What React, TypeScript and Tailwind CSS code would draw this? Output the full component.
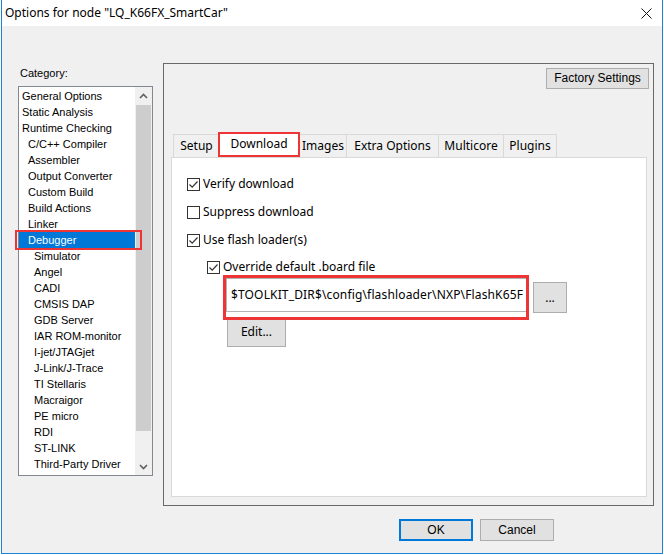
import React from "react";

const ui = "font-['Noto_Sans',sans-serif]";
const tahoma = "font-['Liberation_Sans',Arial,sans-serif]";
const narrow = "font-['Liberation_Sans_Narrow','Liberation_Sans',Arial,sans-serif]";

const categories: [string, number][] = [
  ["General Options", 0],
  ["Static Analysis", 0],
  ["Runtime Checking", 0],
  ["C/C++ Compiler", 1],
  ["Assembler", 1],
  ["Output Converter", 1],
  ["Custom Build", 1],
  ["Build Actions", 1],
  ["Linker", 1],
  ["Debugger", 1],
  ["Simulator", 2],
  ["Angel", 2],
  ["CADI", 2],
  ["CMSIS DAP", 2],
  ["GDB Server", 2],
  ["IAR ROM-monitor", 2],
  ["I-jet/JTAGjet", 2],
  ["J-Link/J-Trace", 2],
  ["TI Stellaris", 2],
  ["Macraigor", 2],
  ["PE micro", 2],
  ["RDI", 2],
  ["ST-LINK", 2],
  ["Third-Party Driver", 2],
];

const indent = ["pl-[3px]", "pl-[9px]", "pl-[15px]"];

function Check({ checked }: { checked: boolean }) {
  return (
    <span className="flex h-[13px] w-[13px] shrink-0 items-center justify-center border border-[#333333] bg-white">
      {checked && (
        <svg width="11" height="11" viewBox="0 0 11 11">
          <path d="M1.5 5.5 L4.2 8.2 L9.5 2.5" fill="none" stroke="#333333" strokeWidth="1.2" />
        </svg>
      )}
    </span>
  );
}

function CheckRow({ label, checked, className }: { label: string; checked: boolean; className: string }) {
  return (
    <div className={`flex h-[20px] items-center gap-[3px] ${className}`}>
      <Check checked={checked} />
      <span className="text-[12px] leading-[20px] text-black">{label}</span>
    </div>
  );
}

function Chevron({ up }: { up: boolean }) {
  return (
    <svg width="9" height="6" viewBox="0 0 9 6">
      <path
        d={up ? "M1 5 L4.5 1.5 L8 5" : "M1 1 L4.5 4.5 L8 1"}
        fill="none"
        stroke="#606060"
        strokeWidth="1.6"
      />
    </svg>
  );
}

export default function App() {
  return (
    <div className="h-[555px] w-[664px] overflow-hidden bg-white">
      <div className="ml-px flex h-[554px] w-[662px] flex-col border-x border-b border-[#1883d7] bg-[#f0f0f0]">
        {/* title bar */}
        <div className={`flex h-[26px] shrink-0 items-center bg-white pl-[3px] ${ui}`}>
          <span className="text-[12px] text-black">Options for node "LQ_K66FX_SmartCar"</span>
          <svg className="ml-auto mr-[10px]" width="11" height="11" viewBox="0 0 11 11">
            <path d="M0.5 0.5 L10.5 10.5 M10.5 0.5 L0.5 10.5" stroke="#111" strokeWidth="1" />
          </svg>
        </div>

        <div className="mt-[37px] flex h-[443px] shrink-0">
          {/* category column */}
          <div className={`ml-[16px] w-[135px] ${tahoma}`}>
            <div className="h-[23px] pl-[2px] pt-[3px] text-[11px] leading-[14px] text-black">Category:</div>
            <div className="relative flex h-[390px] border border-[#828790] bg-white">
              <div className="w-[116px] pt-px">
                {categories.map(([name, lvl]) => {
                  const sel = name === "Debugger";
                  return (
                    <div
                      key={name}
                      className={`h-[16px] whitespace-nowrap text-[11px] leading-[16px] ${indent[lvl]} ${
                        sel ? "bg-[#0078d7] text-white" : "text-black"
                      }`}
                    >
                      {name}
                    </div>
                  );
                })}
              </div>
              <div className="flex w-[17px] flex-col bg-[#f0f0f0]">
                <div className="flex h-[17px] items-center justify-center">
                  <Chevron up />
                </div>
                <div className="mx-px mt-px h-[326px] bg-[#cdcdcd]" />
                <div className="flex-1" />
                <div className="flex h-[17px] items-center justify-center">
                  <Chevron up={false} />
                </div>
              </div>
              <div className="absolute left-[-4px] top-[143px] h-[20px] w-[127px] border-2 border-[#ee3535]" />
            </div>
          </div>

          {/* options panel */}
          <div className={`ml-[10px] flex w-[491px] flex-col border border-[#696969] ${ui}`}>
            <div className="mr-[4px] mt-[4px] flex justify-end">
              <button
                className={`h-[21px] w-[103px] border border-[#adadad] bg-[#e1e1e1] text-[12px] leading-[19px] text-black ${narrow}`}
              >
                Factory Settings
              </button>
            </div>

            <div className="ml-[9px] mt-[43px] flex h-[25px] items-end text-[12px] text-black">
              <div className="flex h-[23px] w-[45px] items-center justify-center border-l border-t border-[#d9d9d9] pl-[1px]">
                Setup
              </div>
              <div className="flex h-[25px] w-[82px] items-center justify-center border-2 border-[#ee3535] bg-white pb-[2px]">
                Download
              </div>
              <div className="flex h-[23px] w-[46px] items-center justify-center border-t border-[#d9d9d9]">
                Images
              </div>
              <div className="flex h-[23px] w-[92px] items-center justify-center border-l border-t border-[#d9d9d9]">
                Extra Options
              </div>
              <div className="flex h-[23px] w-[65px] items-center justify-center border-l border-t border-[#d9d9d9]">
                Multicore
              </div>
              <div className="flex h-[23px] w-[54px] items-center justify-center border-x border-t border-[#d9d9d9]">
                Plugins
              </div>
            </div>

            <div className="ml-[7px] h-[340px] w-[476px] border border-[#d9d9d9] bg-white">
              <CheckRow className="ml-[15px] mt-[16px]" label="Verify download" checked />
              <CheckRow className="ml-[15px] mt-[8px]" label="Suppress download" checked={false} />
              <CheckRow className="ml-[15px] mt-[8px]" label="Use flash loader(s)" checked />
              <CheckRow className="ml-[35px] mt-[7px]" label="Override default .board file" checked />

              <div className="ml-[54px] mt-px flex items-start">
                <div className="relative h-[34px] w-[301px]">
                  <div className="flex h-full items-center overflow-hidden whitespace-nowrap border border-[#b4b4b4] bg-white pl-[4px] text-[12px] tracking-[0.15px] text-black">
                    $TOOLKIT_DIR$\config\flashloader\NXP\FlashK65F
                  </div>
                  <div className="absolute left-[-3px] top-[-3px] z-10 h-[45px] w-[306px] border-[3px] border-[#ee3535]" />
                </div>
                <button className="ml-[6px] mt-[4px] h-[31px] w-[34px] border border-[#adadad] bg-[#e1e1e1] text-[12px] leading-[22px] text-black">
                  ...
                </button>
              </div>

              <button className="ml-[55px] mt-[4px] block h-[30px] w-[59px] border border-[#adadad] bg-[#e1e1e1] text-[12px] text-black">
                Edit...
              </button>
            </div>
          </div>
        </div>

        {/* footer buttons */}
        <div className={`ml-[397px] mt-[13px] flex gap-[7px] ${narrow}`}>
          <button className="h-[22px] w-[74px] border-2 border-[#0078d7] bg-[#e1e1e1] text-[12px] leading-[18px] text-black">
            OK
          </button>
          <button className="h-[22px] w-[74px] border border-[#adadad] bg-[#e1e1e1] text-[12px] leading-[20px] text-black">
            Cancel
          </button>
        </div>
      </div>
    </div>
  );
}
